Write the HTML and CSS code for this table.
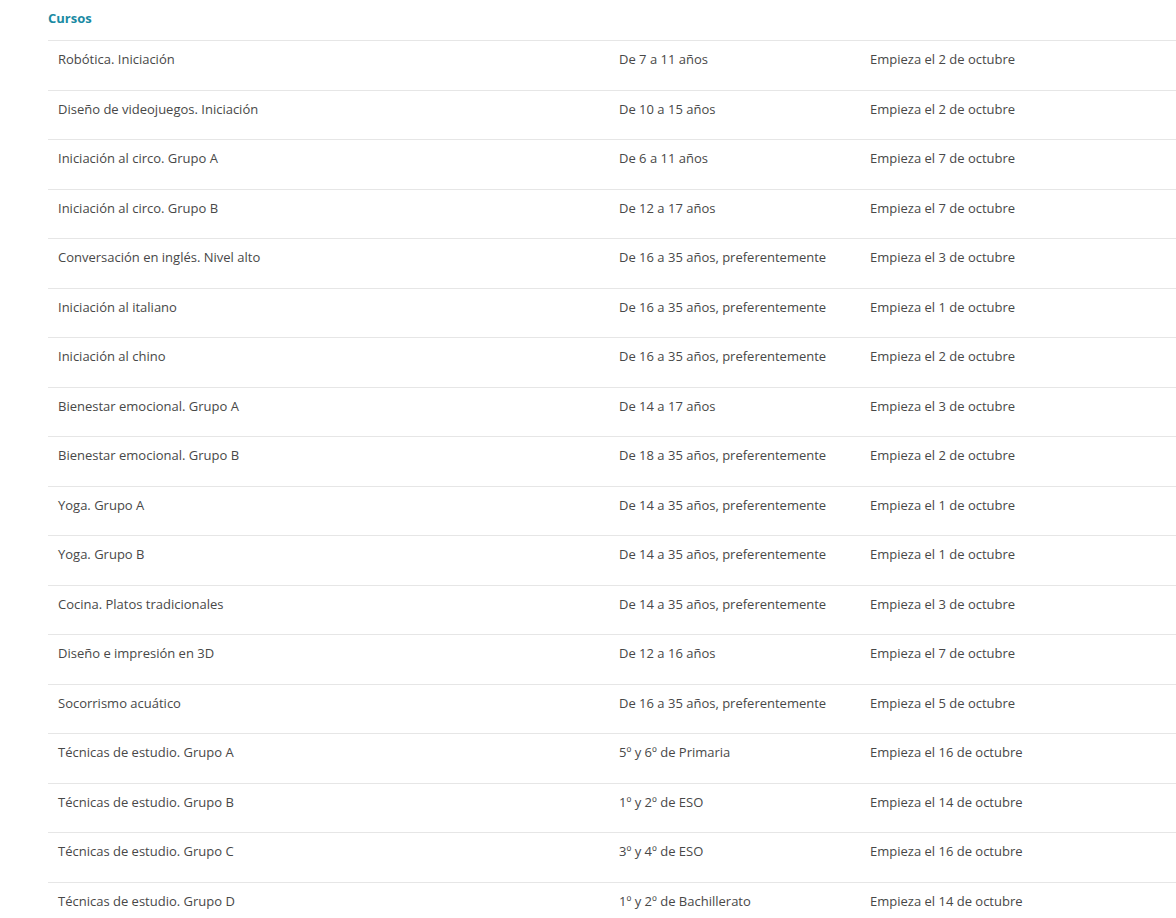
FILE: index.html
```html
<!DOCTYPE html>
<html lang="es">
<head>
<meta charset="utf-8">
<link rel="stylesheet" href="styles.css">
</head>
<body>
<div class="wrap">
<h2 class="title">Cursos</h2>
<table class="courses">
<colgroup><col class="c1"><col class="c2"><col class="c3"></colgroup>
<tbody>
<tr><td>Robótica. Iniciación</td><td>De 7 a 11 años</td><td>Empieza el 2 de octubre</td></tr>
<tr><td>Diseño de videojuegos. Iniciación</td><td>De 10 a 15 años</td><td>Empieza el 2 de octubre</td></tr>
<tr><td>Iniciación al circo. Grupo A</td><td>De 6 a 11 años</td><td>Empieza el 7 de octubre</td></tr>
<tr><td>Iniciación al circo. Grupo B</td><td>De 12 a 17 años</td><td>Empieza el 7 de octubre</td></tr>
<tr><td>Conversación en inglés. Nivel alto</td><td>De 16 a 35 años, preferentemente</td><td>Empieza el 3 de octubre</td></tr>
<tr><td>Iniciación al italiano</td><td>De 16 a 35 años, preferentemente</td><td>Empieza el 1 de octubre</td></tr>
<tr><td>Iniciación al chino</td><td>De 16 a 35 años, preferentemente</td><td>Empieza el 2 de octubre</td></tr>
<tr><td>Bienestar emocional. Grupo A</td><td>De 14 a 17 años</td><td>Empieza el 3 de octubre</td></tr>
<tr><td>Bienestar emocional. Grupo B</td><td>De 18 a 35 años, preferentemente</td><td>Empieza el 2 de octubre</td></tr>
<tr><td>Yoga. Grupo A</td><td>De 14 a 35 años, preferentemente</td><td>Empieza el 1 de octubre</td></tr>
<tr><td>Yoga. Grupo B</td><td>De 14 a 35 años, preferentemente</td><td>Empieza el 1 de octubre</td></tr>
<tr><td>Cocina. Platos tradicionales</td><td>De 14 a 35 años, preferentemente</td><td>Empieza el 3 de octubre</td></tr>
<tr><td>Diseño e impresión en 3D</td><td>De 12 a 16 años</td><td>Empieza el 7 de octubre</td></tr>
<tr><td>Socorrismo acuático</td><td>De 16 a 35 años, preferentemente</td><td>Empieza el 5 de octubre</td></tr>
<tr><td>Técnicas de estudio. Grupo A</td><td>5º y 6º de Primaria</td><td>Empieza el 16 de octubre</td></tr>
<tr><td>Técnicas de estudio. Grupo B</td><td>1º y 2º de ESO</td><td>Empieza el 14 de octubre</td></tr>
<tr><td>Técnicas de estudio. Grupo C</td><td>3º y 4º de ESO</td><td>Empieza el 16 de octubre</td></tr>
<tr><td>Técnicas de estudio. Grupo D</td><td>1º y 2º de Bachillerato</td><td>Empieza el 14 de octubre</td></tr>
</tbody>
</table>
</div>
</body>
</html>
```

FILE: styles.css
```css
html, body {
  margin: 0;
  padding: 0;
  background: #fff;
}
body {
  font-family: "Open Sans", "Liberation Sans", sans-serif;
  font-size: 13px;
  color: #484848;
  overflow: hidden;
}
.wrap {
  padding-left: 48px;
}
.title {
  margin: 0;
  padding-top: 8px;
  height: 40px;
  box-sizing: border-box;
  font-size: 13px;
  line-height: 20px;
  font-weight: 700;
  color: #1a8aa3;
}
.courses {
  width: 1128px;
  border-collapse: collapse;
  table-layout: fixed;
}
.c1 { width: 561px; }
.c2 { width: 251px; }
.c3 { width: 316px; }
.courses td {
  border-top: 1px solid #e6e6e6;
  padding: 9px 10px 20px;
  line-height: 19.5px;
  vertical-align: top;
  white-space: nowrap;
}
```
